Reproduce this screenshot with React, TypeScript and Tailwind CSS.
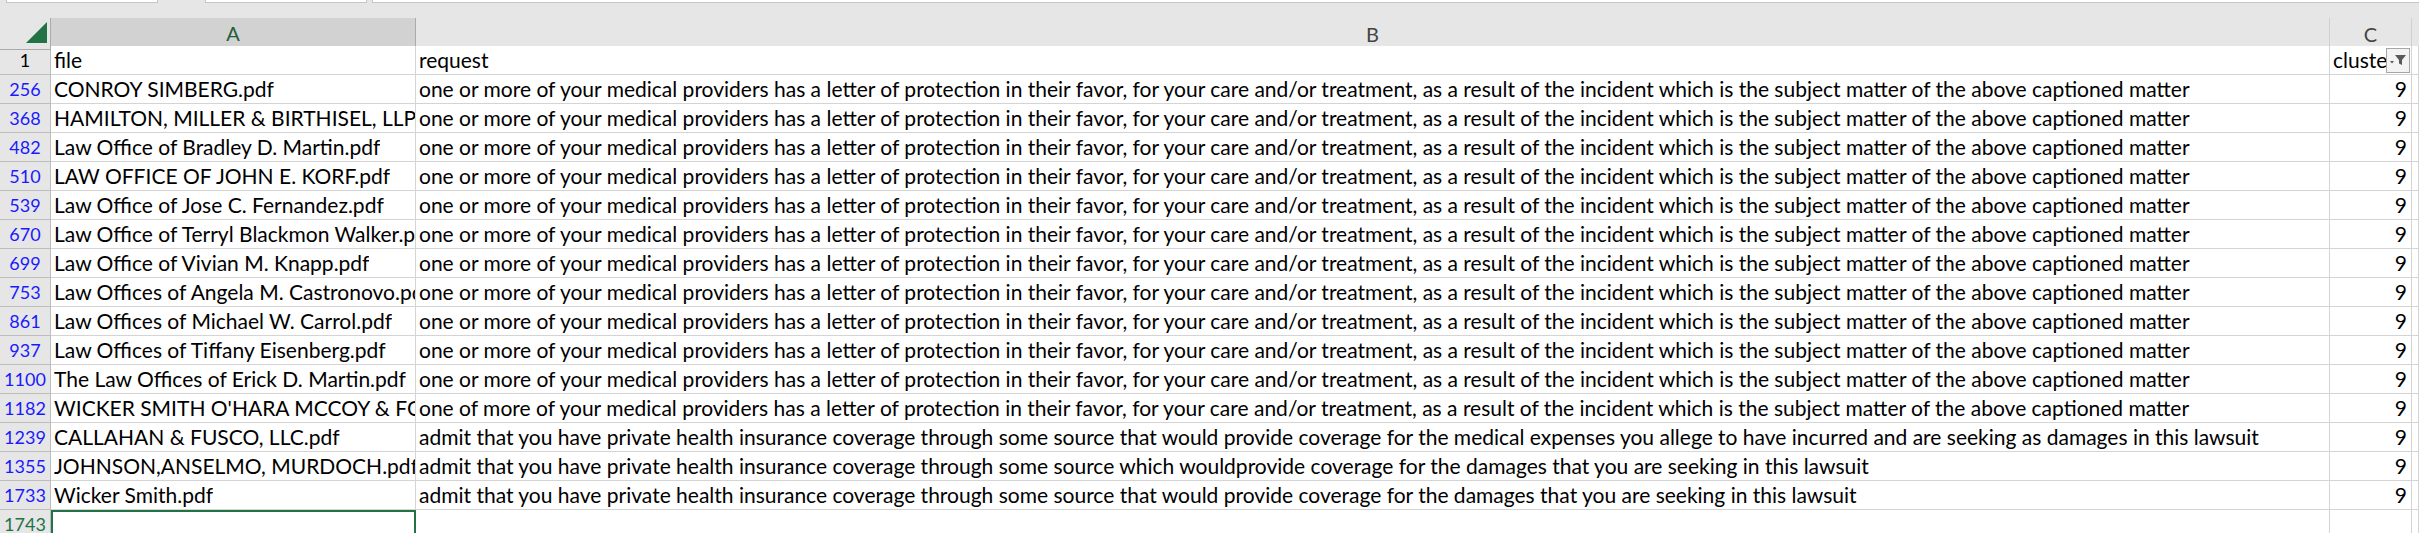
const LOP =
  "one or more of your medical providers has a letter of protection in their favor, for your care and/or treatment, as a result of the incident which is the subject matter of the above captioned matter";

const rows = [
  { n: "256", file: "CONROY SIMBERG.pdf", req: LOP },
  { n: "368", file: "HAMILTON, MILLER & BIRTHISEL, LLP.pdf", req: LOP },
  { n: "482", file: "Law Office of Bradley D. Martin.pdf", req: LOP },
  { n: "510", file: "LAW OFFICE OF JOHN E. KORF.pdf", req: LOP },
  { n: "539", file: "Law Office of Jose C. Fernandez.pdf", req: LOP },
  { n: "670", file: "Law Office of Terryl Blackmon Walker.pdf", req: LOP },
  { n: "699", file: "Law Office of Vivian M. Knapp.pdf", req: LOP },
  { n: "753", file: "Law Offices of Angela M. Castronovo.pdf", req: LOP },
  { n: "861", file: "Law Offices of Michael W. Carrol.pdf", req: LOP },
  { n: "937", file: "Law Offices of Tiffany Eisenberg.pdf", req: LOP },
  { n: "1100", file: "The Law Offices of Erick D. Martin.pdf", req: LOP },
  { n: "1182", file: "WICKER SMITH O'HARA MCCOY & FORD.pdf", req: LOP.replace("one or more", "one of more") },
  {
    n: "1239",
    file: "CALLAHAN & FUSCO, LLC.pdf",
    req: "admit that you have private health insurance coverage through some source that would provide coverage for the medical expenses you allege to have incurred and are seeking as damages in this lawsuit",
  },
  {
    n: "1355",
    file: "JOHNSON,ANSELMO, MURDOCH.pdf",
    req: "admit that you have private health insurance coverage through some source which wouldprovide coverage for the damages that you are seeking in this lawsuit",
  },
  {
    n: "1733",
    file: "Wicker Smith.pdf",
    req: "admit that you have private health insurance coverage through some source that would provide coverage for the damages that you are seeking in this lawsuit",
  },
];

const grid = "grid grid-cols-[51px_365px_1914px_82px_1fr]";
const cell = "flex items-center overflow-hidden whitespace-nowrap border-r border-b border-[#d4d4d4] bg-white";
const rowHead = "flex items-center justify-center text-[18px] border-r border-b border-[#bdbdbd] bg-[#e6e6e6]";

function FilterButton() {
  return (
    <div className="flex h-[25px] w-[24px] shrink-0 items-center justify-center border border-[#a6a6a6] bg-[#f3f3f3]">
      <svg width="18" height="14" viewBox="0 0 18 14">
        <path d="M6 2h11l-4 5v5l-3-1.5V7z" fill="#595959" />
        <path d="M1 8h4l-2 2.5z" fill="#595959" />
      </svg>
    </div>
  );
}

export default function App() {
  return (
    <div className="h-[533px] w-[2419px] overflow-hidden bg-[#e6e6e6] font-['Lato',sans-serif] text-[21px] text-black">
      {/* formula bar remnants */}
      <div className="flex h-[18px] items-start gap-[5px] pl-[6px]">
        <div className="h-[3px] w-[152px] border-x border-b border-[#c6c6c6] bg-white" />
        <div className="ml-[42px] h-[3px] w-[162px] border-x border-b border-[#c6c6c6] bg-white" />
        <div className="h-[3px] flex-1 border-l border-b border-[#c6c6c6] bg-white" />
      </div>

      {/* column headers */}
      <div className={`${grid} h-[28px]`}>
        <div className="relative border-r border-b border-[#ababab] bg-[#e6e6e6]">
          <svg className="absolute left-[26px] top-[4px]" width="22" height="22" viewBox="0 0 22 22">
            <path d="M21 0v21H0z" fill="#217346" />
          </svg>
        </div>
        <div className="flex items-center justify-center border-r border-[#ababab] border-b-2 border-b-[#217346] bg-[#d2d2d2] text-[20px] text-[#215f3a]">
          A
        </div>
        <div className="flex items-center justify-center border-r border-b border-[#ababab] border-r-[#d0d0d0] text-[20px] text-[#444]">
          B
        </div>
        <div className="flex items-center justify-center border-r border-b border-[#ababab] border-r-[#d0d0d0] text-[20px] text-[#444]">
          C
        </div>
        <div className="border-b border-[#ababab]" />
      </div>

      {/* header row */}
      <div className={`${grid} h-[29px]`}>
        <div className={rowHead}>1</div>
        <div className={`${cell} pl-[3px]`}>file</div>
        <div className={`${cell} pl-[3px]`}>request</div>
        <div className={`${cell} justify-between pl-[3px] pr-[1px]`}>
          <span className="min-w-0 overflow-hidden">cluste</span>
          <FilterButton />
        </div>
        <div className={cell} />
      </div>

      {rows.map((r) => (
        <div key={r.n} className={`${grid} h-[29px]`}>
          <div className={`${rowHead} text-[#1a1aff]`}>{r.n}</div>
          <div className={`${cell} pl-[3px]`}>
            <span className="min-w-0 overflow-hidden">{r.file}</span>
          </div>
          <div className={`${cell} pl-[3px]`}>{r.req}</div>
          <div className={`${cell} justify-end pr-[4px]`}>9</div>
          <div className={cell} />
        </div>
      ))}

      {/* active row */}
      <div className={`${grid} h-[29px]`}>
        <div className={`${rowHead} bg-[#d2d2d2] text-[#217346]`}>1743</div>
        <div className="border-2 border-b-0 border-[#217346] bg-white" />
        <div className={cell} />
        <div className={cell} />
        <div className={cell} />
      </div>
    </div>
  );
}
